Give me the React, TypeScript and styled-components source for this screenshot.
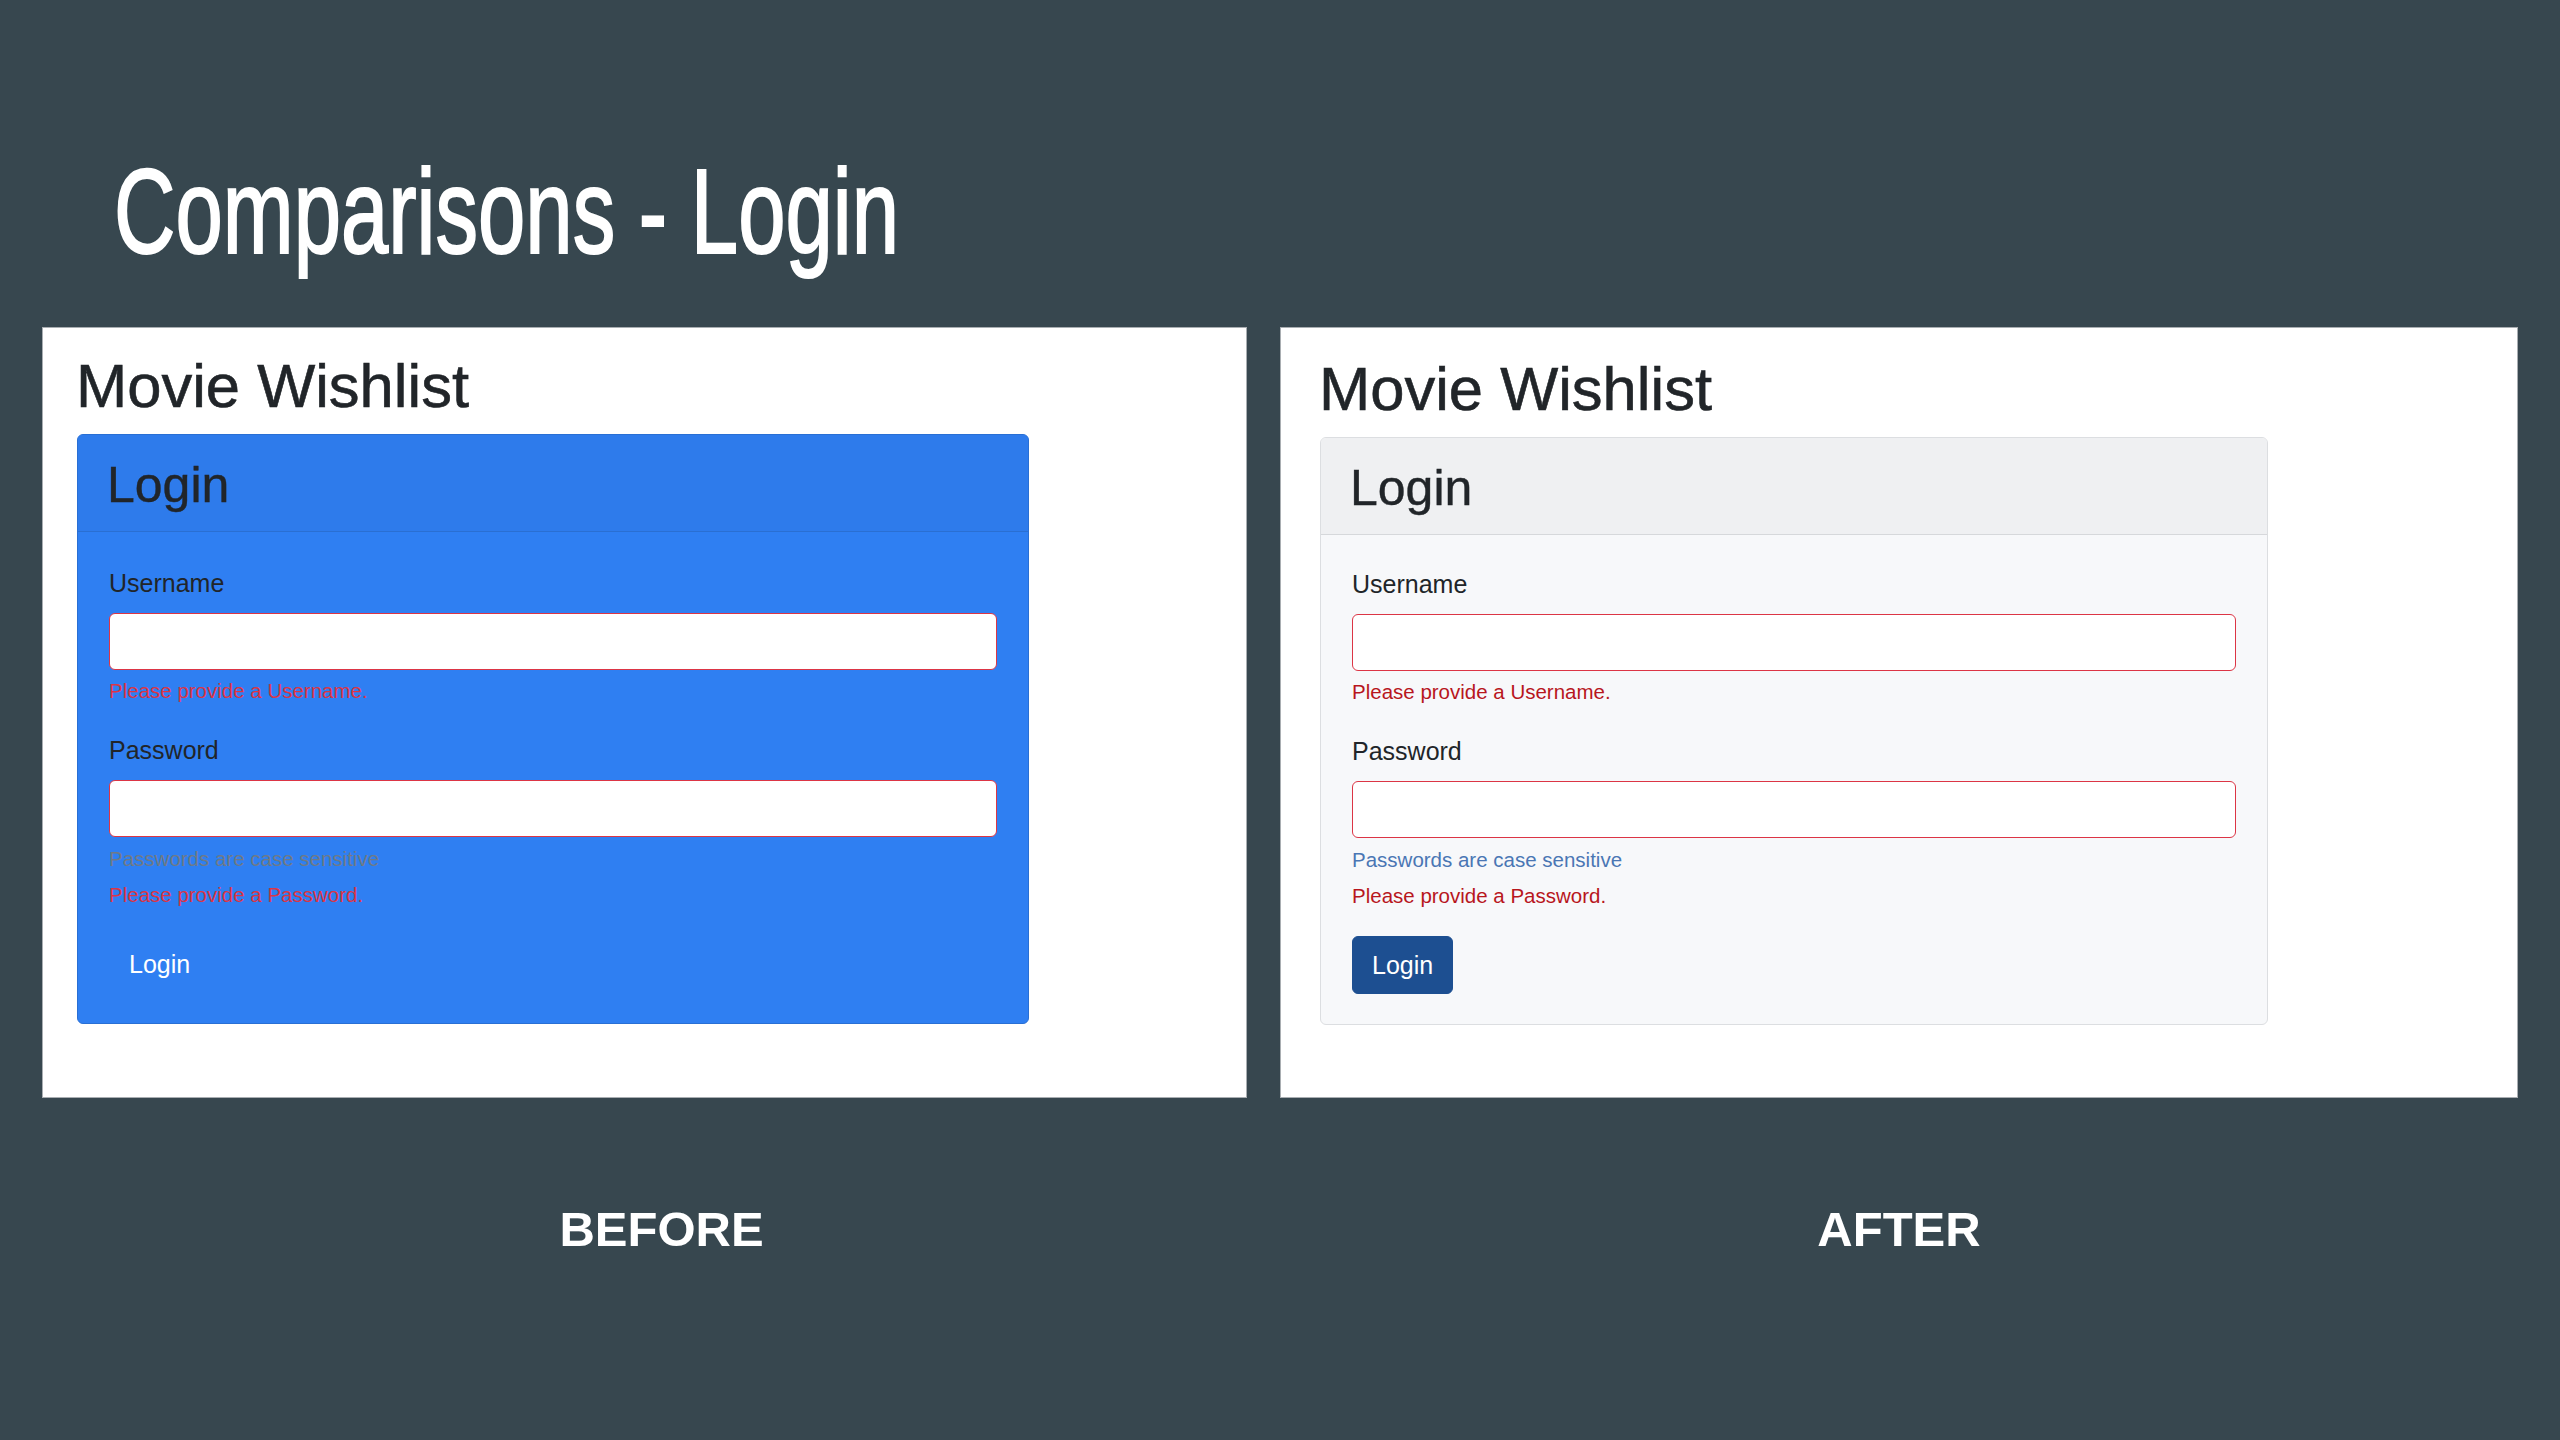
import React from "react";
import styled, { createGlobalStyle } from "styled-components";

const GlobalStyle = createGlobalStyle`
  html, body {
    margin: 0;
    padding: 0;
    background: #37474f;
  }
  body {
    width: 2560px;
    height: 1440px;
    overflow: hidden;
    font-family: "Liberation Sans", Arial, sans-serif;
  }
  * { box-sizing: border-box; }
`;

type Variant = "before" | "after";

const theme = {
  before: {
    cardBg: "#2f7ff2",
    cardBorder: "#296fd4",
    headerBg: "#2e7beb",
    headerBorder: "#2a6fd2",
    text: "#212529",
    error: "#dc3545",
    helper: "#6f7a86",
    btnBg: "transparent",
    pt: 21,
    bodyPt: 36,
  },
  after: {
    cardBg: "#f7f8fa",
    cardBorder: "#dcdee1",
    headerBg: "#eff0f2",
    headerBorder: "#d6d8db",
    text: "#212529",
    error: "#b8161d",
    helper: "#4a76b4",
    btnBg: "#1d4f91",
    pt: 24,
    bodyPt: 34,
  },
};

const Slide = styled.div`
  display: flex;
  flex-direction: column;
  width: 2560px;
  height: 1440px;
  padding-top: 151px;
`;

const Title = styled.h1`
  margin: 0 0 0 114px;
  font-family: "Liberation Sans", Arial, sans-serif;
  font-weight: 400;
  font-size: 120px;
  line-height: 120px;
  height: 120px;
  color: #ffffff;
  white-space: nowrap;
  transform: scaleX(0.709);
  transform-origin: left center;
  -webkit-text-stroke: 2px #ffffff;
`;

const Columns = styled.div`
  display: grid;
  grid-template-columns: 1205px 1238px;
  column-gap: 33px;
  padding-left: 42px;
`;

const PanelRow = styled(Columns)`
  margin-top: 56px;
`;

const CaptionRow = styled(Columns)`
  margin-top: 106px;
`;

const Panel = styled.section<{ $v: Variant; $pl: number }>`
  height: 771px;
  background: #ffffff;
  border: 1px solid #a9aeb2;
  padding: ${(p) => theme[p.$v].pt}px 0 0 ${(p) => p.$pl}px;
`;

const AppHeading = styled.h1`
  margin: 0 0 11px -1px;
  font-size: 61.5px;
  line-height: 74px;
  font-weight: 400;
  color: #212529;
  -webkit-text-stroke: 0.6px #212529;
  white-space: nowrap;
`;

const Card = styled.div<{ $v: Variant; $w: number }>`
  width: ${(p) => p.$w}px;
  background: ${(p) => theme[p.$v].cardBg};
  border: 1px solid ${(p) => theme[p.$v].cardBorder};
  border-radius: 6px;
  overflow: hidden;
`;

const CardHeader = styled.div<{ $v: Variant }>`
  padding: 20px 29px 16px;
  background: ${(p) => theme[p.$v].headerBg};
  border-bottom: 1px solid ${(p) => theme[p.$v].headerBorder};
`;

const CardTitle = styled.h2<{ $v: Variant }>`
  margin: 0;
  font-size: 50px;
  line-height: 60px;
  font-weight: 400;
  color: ${(p) => theme[p.$v].text};
  -webkit-text-stroke: 0.4px ${(p) => theme[p.$v].text};
`;

const CardBody = styled.form<{ $v: Variant }>`
  display: flex;
  flex-direction: column;
  align-items: flex-start;
  padding: ${(p) => theme[p.$v].bodyPt}px 31px 30px 31px;
`;

const Field = styled.div`
  display: flex;
  flex-direction: column;
  width: 100%;
  & + & {
    margin-top: 29px;
  }
`;

const Label = styled.label<{ $v: Variant }>`
  display: block;
  font-size: 25px;
  line-height: 30px;
  color: ${(p) => theme[p.$v].text};
  margin-bottom: 15px;
`;

const Input = styled.input`
  display: block;
  width: 100%;
  height: 57px;
  margin: 0;
  padding: 0 18px;
  background: #ffffff;
  border: 1.5px solid #dc3545;
  border-radius: 6px;
  font-size: 25px;
  font-family: "Liberation Sans", Arial, sans-serif;
  outline: none;
`;

const Feedback = styled.div<{ $v: Variant; $kind: "error" | "helper"; $mt: number }>`
  font-size: 20.5px;
  line-height: 30px;
  margin-top: ${(p) => p.$mt}px;
  color: ${(p) => (p.$kind === "error" ? theme[p.$v].error : theme[p.$v].helper)};
  white-space: nowrap;
`;

const SubmitButton = styled.button<{ $v: Variant }>`
  margin-top: 25px;
  padding: 9px 19px;
  font-family: "Liberation Sans", Arial, sans-serif;
  font-size: 25px;
  line-height: 38px;
  color: #ffffff;
  background: ${(p) => theme[p.$v].btnBg};
  border: 1px solid ${(p) => theme[p.$v].btnBg};
  border-radius: 6px;
  cursor: pointer;
`;

const Caption = styled.div<{ $offset: number }>`
  text-align: center;
  padding-left: ${(p) => p.$offset}px;
  font-family: "Liberation Sans", Arial, sans-serif;
  font-weight: 700;
  font-size: 49px;
  line-height: 50px;
  color: #ffffff;
`;

function LoginPanel({ v, pl, w }: { v: Variant; pl: number; w: number }) {
  return (
    <Panel $v={v} $pl={pl}>
      <AppHeading>Movie Wishlist</AppHeading>
      <Card $v={v} $w={w}>
        <CardHeader $v={v}>
          <CardTitle $v={v}>Login</CardTitle>
        </CardHeader>
        <CardBody $v={v} onSubmit={(e) => e.preventDefault()}>
          <Field>
            <Label $v={v}>Username</Label>
            <Input type="text" aria-label="Username" />
            <Feedback $v={v} $kind="error" $mt={6}>
              Please provide a Username.
            </Feedback>
          </Field>
          <Field>
            <Label $v={v}>Password</Label>
            <Input type="password" aria-label="Password" />
            <Feedback $v={v} $kind="helper" $mt={7}>
              Passwords are case sensitive
            </Feedback>
            <Feedback $v={v} $kind="error" $mt={6}>
              Please provide a Password.
            </Feedback>
          </Field>
          <SubmitButton $v={v} type="submit">
            Login
          </SubmitButton>
        </CardBody>
      </Card>
    </Panel>
  );
}

export default function App() {
  return (
    <>
      <GlobalStyle />
      <Slide>
        <Title>Comparisons - Login</Title>
        <PanelRow>
          <LoginPanel v="before" pl={34} w={952} />
          <LoginPanel v="after" pl={39} w={948} />
        </PanelRow>
        <CaptionRow>
          <Caption $offset={34}>BEFORE</Caption>
          <Caption $offset={0}>AFTER</Caption>
        </CaptionRow>
      </Slide>
    </>
  );
}
